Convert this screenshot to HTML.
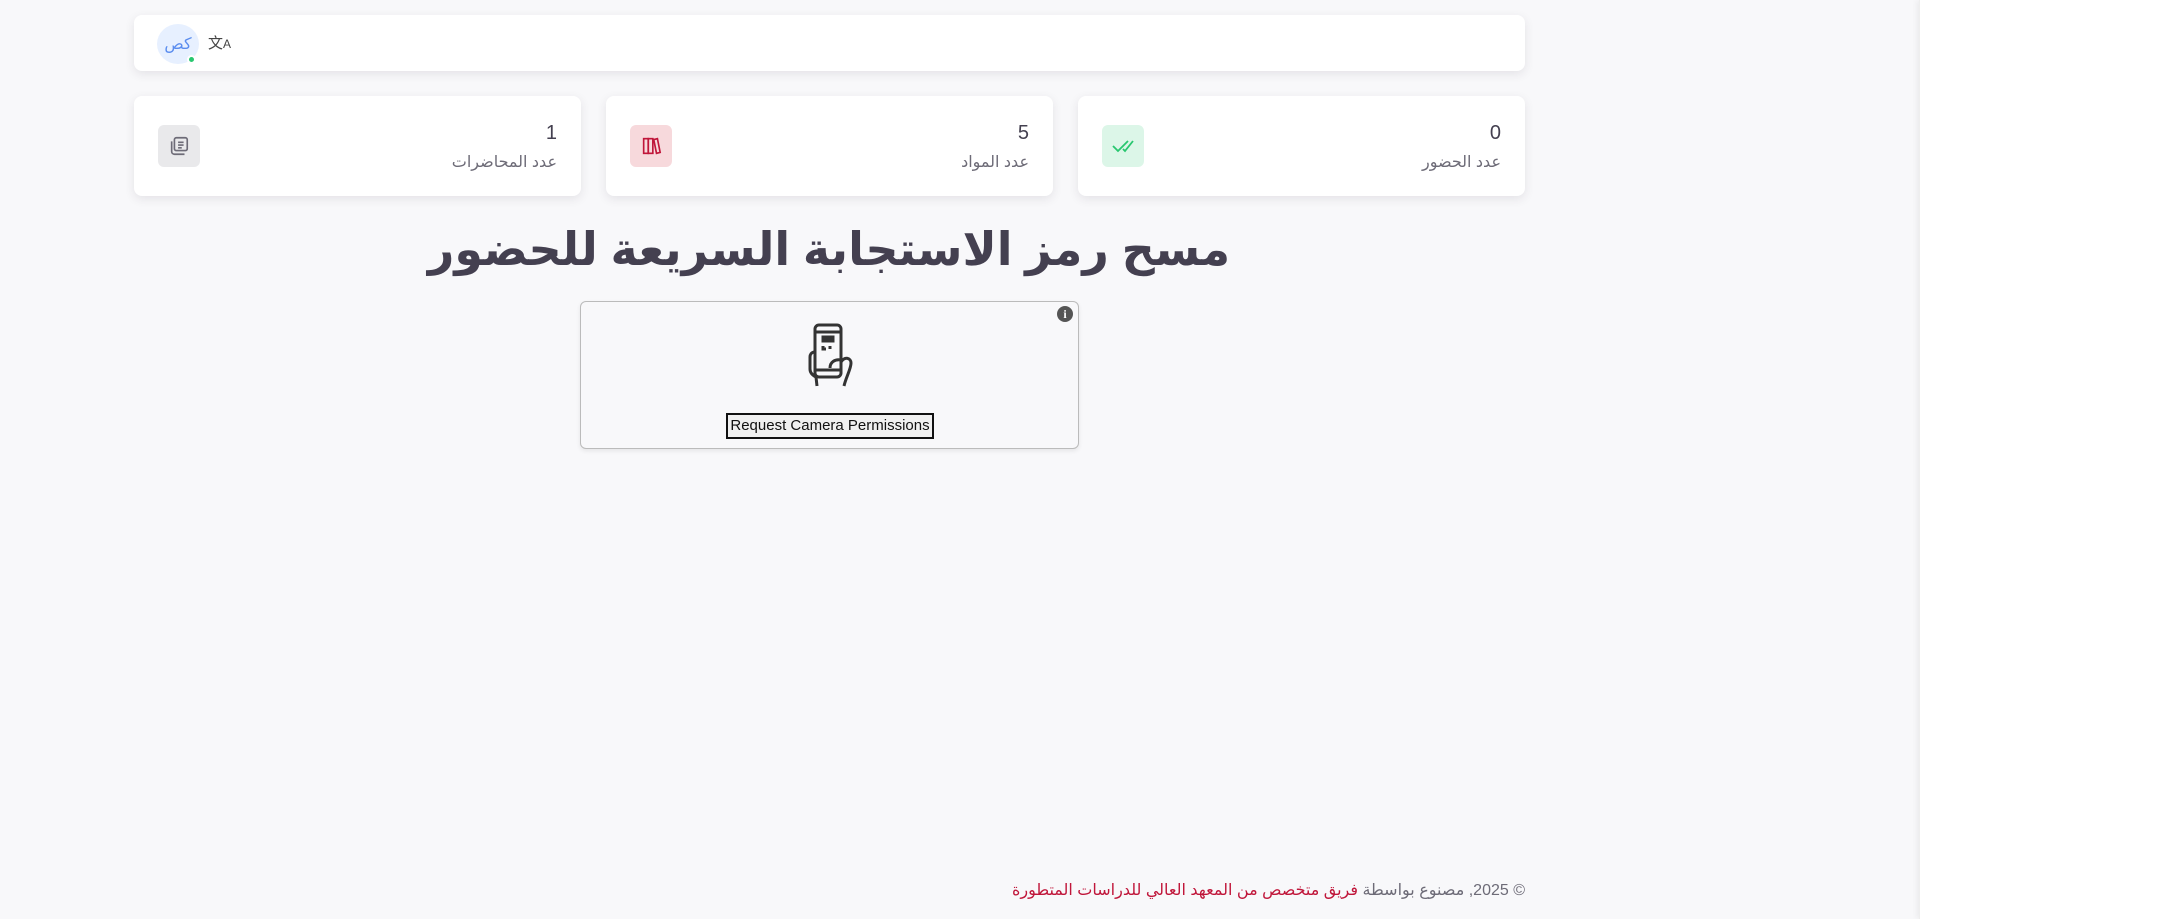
<!DOCTYPE html>
<html><head><meta charset="utf-8"><style>
*{box-sizing:border-box;margin:0;padding:0}
body{width:2180px;height:919px;background:#f8f8fa;font-family:"Liberation Sans","DejaVu Sans",sans-serif;position:relative;overflow:hidden;color:#444050}
.side{position:absolute;left:1919px;top:0;width:261px;height:919px;background:#fff;box-shadow:-2px 0 6px rgba(0,0,0,.06);border-left:1px solid #eee}
.card{position:absolute;background:#fff;border-radius:8px;box-shadow:0 3px 10px rgba(47,43,61,.1)}
.num{position:absolute;right:24px;top:26px;font-size:20px;color:#444050}
.lbl{position:absolute;right:24px;top:56px;font-size:16px;color:#6d6b77}
.ic{position:absolute;left:24px;top:29px;width:42px;height:42px;border-radius:6px;display:flex;align-items:center;justify-content:center}
</style></head><body>
<div class="side"></div>
<div class="card" style="left:134px;top:15px;width:1391px;height:56px">
  <div style="position:absolute;left:23px;top:9px;width:42px;height:40px;border-radius:50%;background:#e7f0ff;color:#5b8def;font-size:16px;display:flex;align-items:center;justify-content:center">كص</div>
  <div style="position:absolute;left:53px;top:40px;width:9px;height:9px;border-radius:50%;background:#28c76f;border:2px solid #fff"></div>
  <div style="position:absolute;left:74px;top:17px;font-size:15px;color:#444">文<span style="font-size:12px">A</span></div>
</div>
<div class="card" style="left:134px;top:96px;width:447px;height:100px">
  <div class="num">1</div><div class="lbl">عدد المحاضرات</div>
  <div class="ic" style="background:#e9e9eb"><svg width="22" height="22" viewBox="0 0 24 24" fill="none" stroke="#6d6b77" stroke-width="1.8"><rect x="7" y="3" width="14" height="14" rx="2"/><path d="M4 7v11a3 3 0 0 0 3 3h11M11 8h6M11 11h6M11 14h4"/></svg></div>
</div>
<div class="card" style="left:606px;top:96px;width:447px;height:100px">
  <div class="num">5</div><div class="lbl">عدد المواد</div>
  <div class="ic" style="background:#f7d9dc"><svg width="22" height="22" viewBox="0 0 24 24" fill="none" stroke="#c0163a" stroke-width="1.8"><rect x="4" y="4" width="5" height="16"/><rect x="9" y="4" width="5" height="16"/><path d="M15 5l4-1 3 15-4 1z"/></svg></div>
</div>
<div class="card" style="left:1078px;top:96px;width:447px;height:100px">
  <div class="num">0</div><div class="lbl">عدد الحضور</div>
  <div class="ic" style="background:#dcf6e8"><svg width="24" height="24" viewBox="0 0 24 24" fill="none" stroke="#28c76f" stroke-width="1.8"><path d="M2 12l5 5L17 7M12 15l2 2L22 7"/></svg></div>
</div>
<div style="position:absolute;left:229px;width:1200px;top:222px;text-align:center;font-size:46px;font-weight:bold;color:#444050;direction:rtl;white-space:nowrap">مسح رمز الاستجابة السريعة للحضور</div>
<div style="position:absolute;left:580px;top:301px;width:499px;height:148px;border:1px solid #bbb;border-radius:6px;background:#f8f8fa;box-shadow:0 2px 5px rgba(0,0,0,.08)">
  <div style="position:absolute;right:5px;top:4px;width:16px;height:16px;border-radius:50%;background:#555;color:#fff;font-size:12px;font-weight:bold;text-align:center;line-height:16px;font-family:'Liberation Serif',serif">i</div>
  <svg style="position:absolute;left:225px;top:20px" width="50" height="66" viewBox="0 0 50 66" fill="none" stroke="#333" stroke-width="3"><rect x="9" y="3" width="26" height="52" rx="4"/><path d="M9 10h26M9 48h26"/><rect x="17" y="15" width="4" height="4" fill="#333"/><rect x="23" y="15" width="4" height="4" fill="#333"/><path d="M17 24v3h3M24 24v3"/><path d="M9 30c-4 0-5 3-5 5v12c0 3 2 6 6 8l1 9M35 40c4-6 10-4 10 1 0 6-5 14-7 23M24 46c0-6 5-9 11-8"/></svg>
  <div style="position:absolute;left:145px;top:111px;width:208px;height:26px;border:2px solid #111;background:#f0f0f0;font-size:15px;color:#111;text-align:center;line-height:22px">Request Camera Permissions</div>
</div>
<div style="position:absolute;right:655px;top:880px;font-size:16px;color:#6d6b77;direction:rtl">© 2025, مصنوع بواسطة <span style="color:#c0163a">فريق متخصص من المعهد العالي للدراسات المتطورة</span></div>
</body></html>
